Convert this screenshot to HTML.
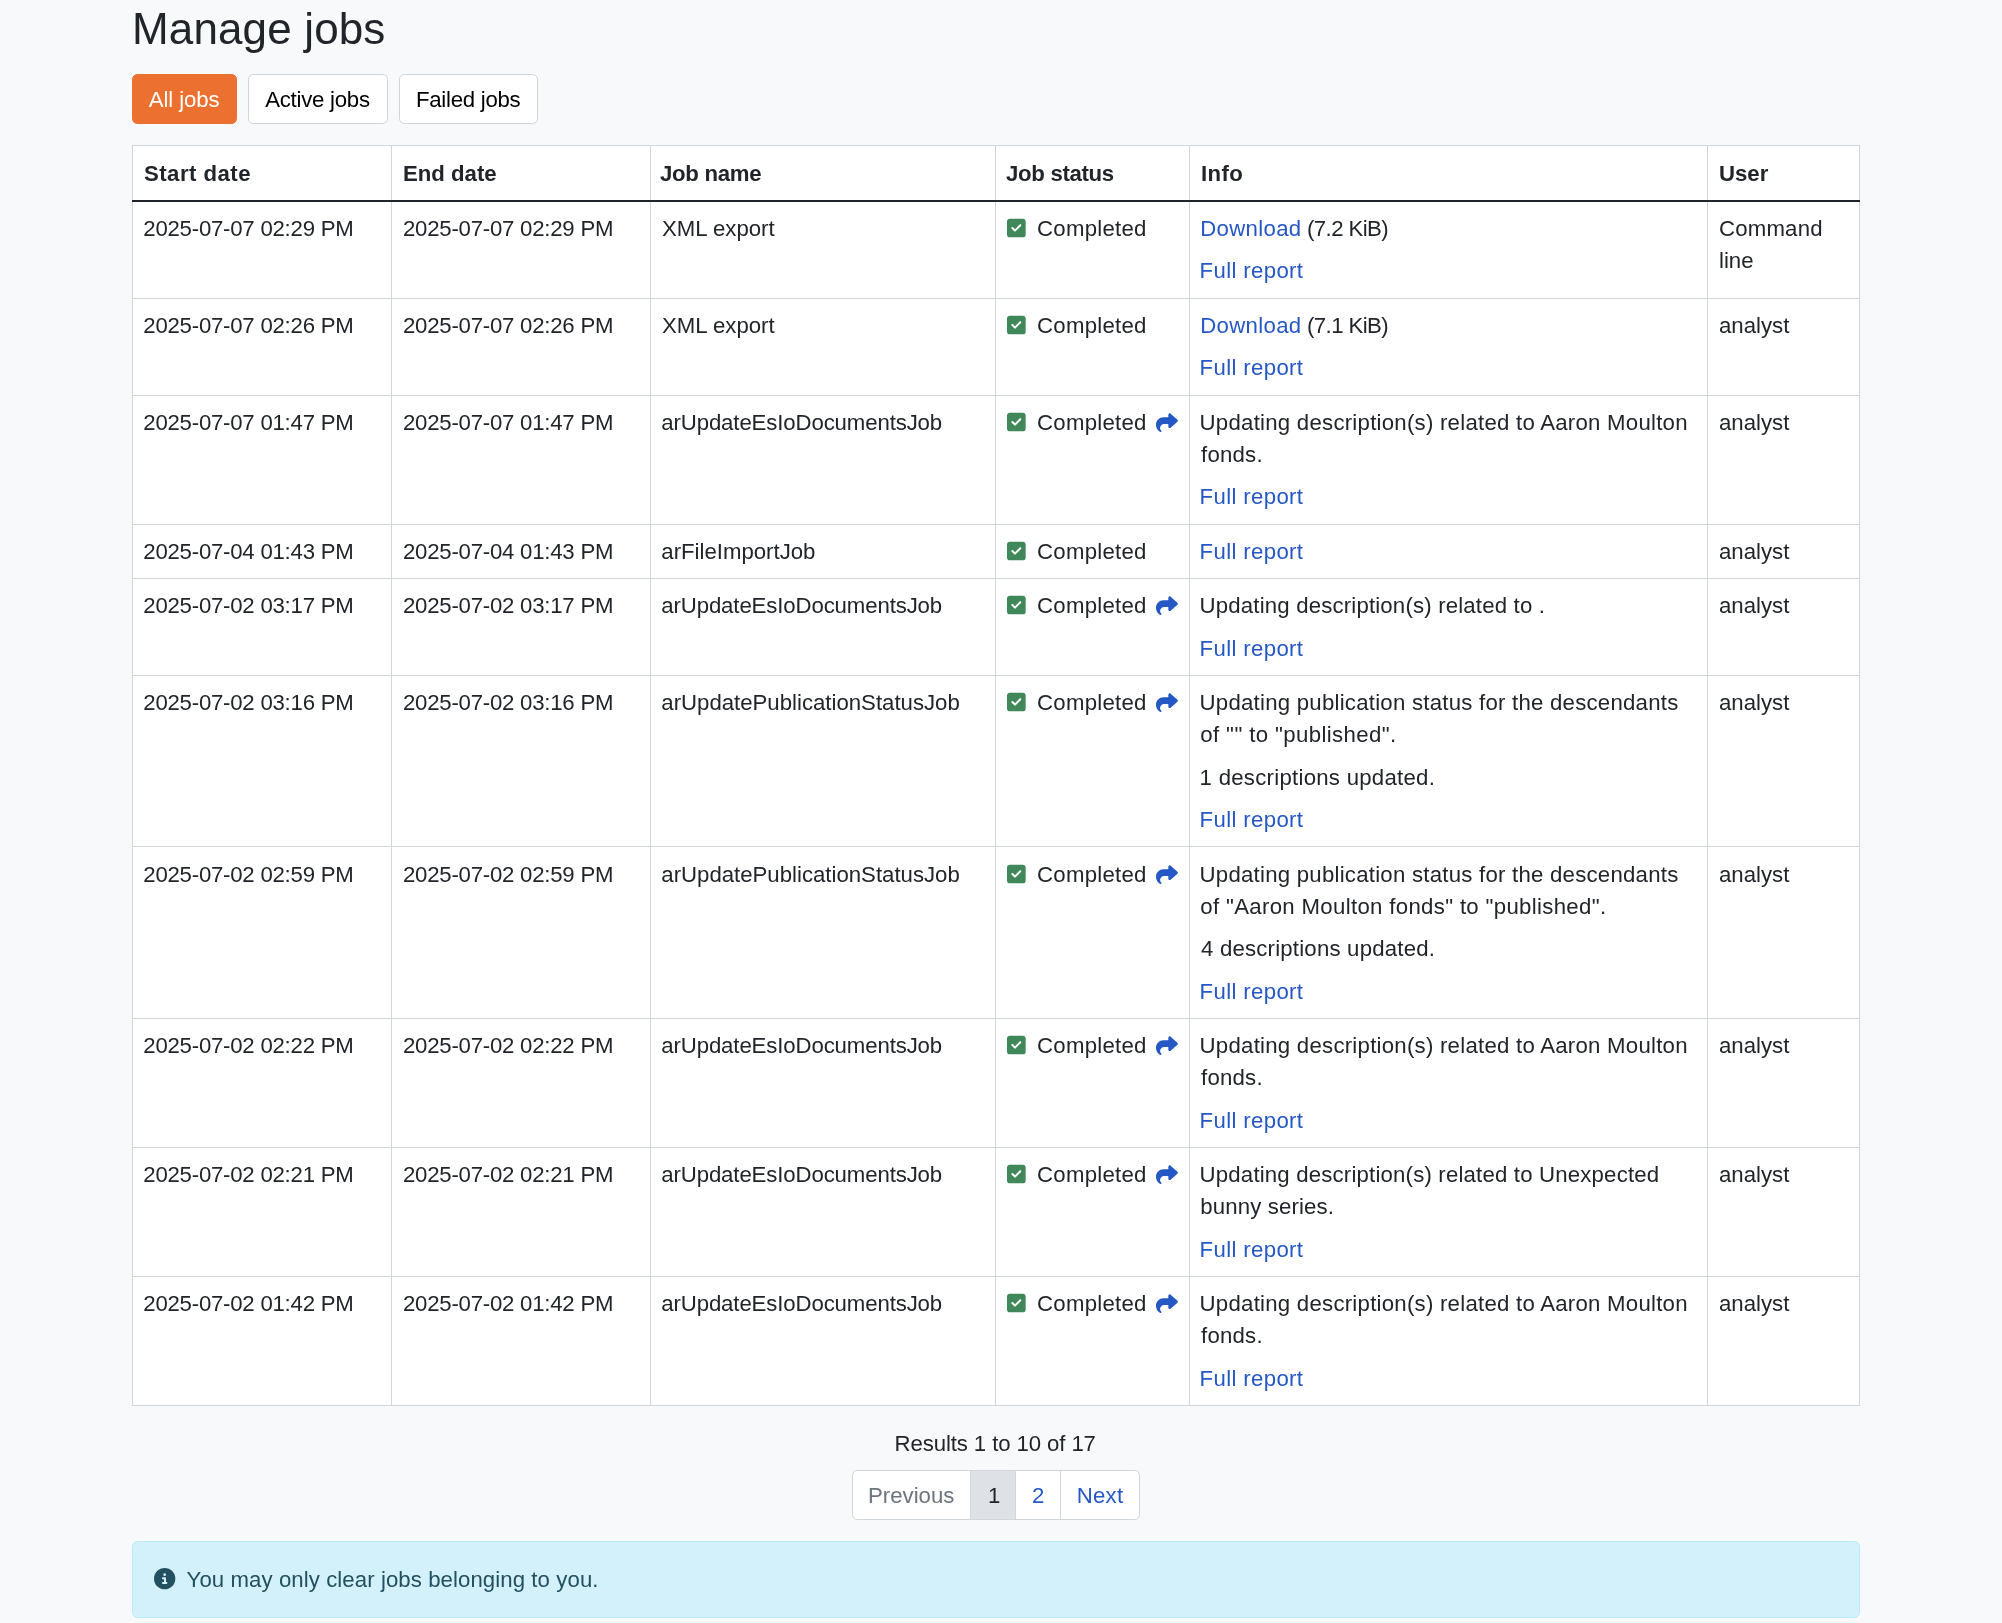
<!DOCTYPE html>
<html><head><meta charset="utf-8"><title>Manage jobs</title>
<style>
*{box-sizing:border-box;margin:0;padding:0}
html,body{width:2002px;height:1623px;overflow:hidden;background:#f8f9fa;}
body{font-family:"Liberation Sans",sans-serif;font-size:22.2px;line-height:32px;color:#212529;position:relative}
.a{position:absolute}
.t{position:absolute;white-space:nowrap}
.lnk{color:#2557c5}
.hl{position:absolute;background:#d1d6db;height:1px}
.vl{position:absolute;background:#d1d6db;width:1px}
.b{font-weight:bold}
</style></head>
<body>
<div style="position:absolute;left:0;top:0;width:2002px;height:1623px;will-change:transform">
<div class="a" style="left:132px;top:74px;width:105.0px;height:50px;border-radius:5.33px;background:#ec702f;border:1px solid #ec702f;"></div>
<div class="a" style="left:248px;top:74px;width:139.6px;height:50px;border-radius:5.33px;background:#fff;border:1px solid #ced4da;"></div>
<div class="a" style="left:399.2px;top:74px;width:138.4px;height:50px;border-radius:5.33px;background:#fff;border:1px solid #ced4da;"></div>
<div class="a" style="left:132px;top:145px;width:1728px;height:1261px;background:#fff"></div>
<div class="vl" style="left:132px;top:145px;height:1261px"></div>
<div class="vl" style="left:391px;top:145px;height:1261px"></div>
<div class="vl" style="left:650px;top:145px;height:1261px"></div>
<div class="vl" style="left:995px;top:145px;height:1261px"></div>
<div class="vl" style="left:1189px;top:145px;height:1261px"></div>
<div class="vl" style="left:1707px;top:145px;height:1261px"></div>
<div class="vl" style="left:1859px;top:145px;height:1261px"></div>
<div class="hl" style="left:132px;top:145px;width:1728px"></div>
<div class="a" style="left:132px;top:200px;width:1728px;height:2px;background:#212529"></div>
<div class="hl" style="left:132px;top:298px;width:1728px"></div>
<div class="hl" style="left:132px;top:395px;width:1728px"></div>
<div class="hl" style="left:132px;top:524px;width:1728px"></div>
<div class="hl" style="left:132px;top:578px;width:1728px"></div>
<div class="hl" style="left:132px;top:675px;width:1728px"></div>
<div class="hl" style="left:132px;top:846px;width:1728px"></div>
<div class="hl" style="left:132px;top:1018px;width:1728px"></div>
<div class="hl" style="left:132px;top:1147px;width:1728px"></div>
<div class="hl" style="left:132px;top:1276px;width:1728px"></div>
<div class="hl" style="left:132px;top:1405px;width:1728px"></div>
<div class="a" style="left:1007.2px;top:217.40px;width:18.667px;height:21.333px"><svg width="18.667" height="21.333" viewBox="0 -8 448 512" style="position:absolute;left:0;top:0;overflow:visible"><path fill="#40875a" d="M64 32C28.7 32 0 60.7 0 96V416c0 35.3 28.7 64 64 64H384c35.3 0 64-28.7 64-64V96c0-35.3-28.7-64-64-64H64z"/><path fill="#fff" d="M337 209L209 337c-9.4 9.4-24.6 9.4-33.9 0l-64-64c-9.4-9.4-9.4-24.6 0-33.9s24.6-9.4 33.9 0l47 47L303 175c9.4-9.4 24.6-9.4 33.9 0s9.4 24.6 0 33.9z"/></svg></div>
<div class="a" style="left:1007.2px;top:314.40px;width:18.667px;height:21.333px"><svg width="18.667" height="21.333" viewBox="0 -8 448 512" style="position:absolute;left:0;top:0;overflow:visible"><path fill="#40875a" d="M64 32C28.7 32 0 60.7 0 96V416c0 35.3 28.7 64 64 64H384c35.3 0 64-28.7 64-64V96c0-35.3-28.7-64-64-64H64z"/><path fill="#fff" d="M337 209L209 337c-9.4 9.4-24.6 9.4-33.9 0l-64-64c-9.4-9.4-9.4-24.6 0-33.9s24.6-9.4 33.9 0l47 47L303 175c9.4-9.4 24.6-9.4 33.9 0s9.4 24.6 0 33.9z"/></svg></div>
<div class="a" style="left:1007.2px;top:411.40px;width:18.667px;height:21.333px"><svg width="18.667" height="21.333" viewBox="0 -8 448 512" style="position:absolute;left:0;top:0;overflow:visible"><path fill="#40875a" d="M64 32C28.7 32 0 60.7 0 96V416c0 35.3 28.7 64 64 64H384c35.3 0 64-28.7 64-64V96c0-35.3-28.7-64-64-64H64z"/><path fill="#fff" d="M337 209L209 337c-9.4 9.4-24.6 9.4-33.9 0l-64-64c-9.4-9.4-9.4-24.6 0-33.9s24.6-9.4 33.9 0l47 47L303 175c9.4-9.4 24.6-9.4 33.9 0s9.4 24.6 0 33.9z"/></svg></div>
<div class="a" style="left:1156.0px;top:412.05px;width:21.9px;height:21.333px"><svg width="21.9" height="21.333" viewBox="0 0 512 512" preserveAspectRatio="none" style="position:absolute;left:0;top:0;overflow:visible"><path fill="#2557c5" d="M307 34.8c-11.5 5.1-19 16.6-19 29.2v64H176C78.8 128 0 206.8 0 304C0 417.3 81.5 467.9 100.2 478.1c2.5 1.4 5.3 1.9 8.1 1.9c10.9 0 19.7-8.9 19.7-19.7c0-7.5-4.3-14.4-9.8-19.5C108.8 431.9 96 414.4 96 384c0-53 43-96 96-96h96v64c0 12.6 7.4 24.1 19 29.2s25 3 34.4-5.4l160-144c6.7-6.1 10.6-14.7 10.6-23.8s-3.8-17.7-10.6-23.8l-160-144c-9.4-8.5-22.9-10.6-34.4-5.4z"/></svg></div>
<div class="a" style="left:1007.2px;top:540.40px;width:18.667px;height:21.333px"><svg width="18.667" height="21.333" viewBox="0 -8 448 512" style="position:absolute;left:0;top:0;overflow:visible"><path fill="#40875a" d="M64 32C28.7 32 0 60.7 0 96V416c0 35.3 28.7 64 64 64H384c35.3 0 64-28.7 64-64V96c0-35.3-28.7-64-64-64H64z"/><path fill="#fff" d="M337 209L209 337c-9.4 9.4-24.6 9.4-33.9 0l-64-64c-9.4-9.4-9.4-24.6 0-33.9s24.6-9.4 33.9 0l47 47L303 175c9.4-9.4 24.6-9.4 33.9 0s9.4 24.6 0 33.9z"/></svg></div>
<div class="a" style="left:1007.2px;top:594.40px;width:18.667px;height:21.333px"><svg width="18.667" height="21.333" viewBox="0 -8 448 512" style="position:absolute;left:0;top:0;overflow:visible"><path fill="#40875a" d="M64 32C28.7 32 0 60.7 0 96V416c0 35.3 28.7 64 64 64H384c35.3 0 64-28.7 64-64V96c0-35.3-28.7-64-64-64H64z"/><path fill="#fff" d="M337 209L209 337c-9.4 9.4-24.6 9.4-33.9 0l-64-64c-9.4-9.4-9.4-24.6 0-33.9s24.6-9.4 33.9 0l47 47L303 175c9.4-9.4 24.6-9.4 33.9 0s9.4 24.6 0 33.9z"/></svg></div>
<div class="a" style="left:1156.0px;top:595.05px;width:21.9px;height:21.333px"><svg width="21.9" height="21.333" viewBox="0 0 512 512" preserveAspectRatio="none" style="position:absolute;left:0;top:0;overflow:visible"><path fill="#2557c5" d="M307 34.8c-11.5 5.1-19 16.6-19 29.2v64H176C78.8 128 0 206.8 0 304C0 417.3 81.5 467.9 100.2 478.1c2.5 1.4 5.3 1.9 8.1 1.9c10.9 0 19.7-8.9 19.7-19.7c0-7.5-4.3-14.4-9.8-19.5C108.8 431.9 96 414.4 96 384c0-53 43-96 96-96h96v64c0 12.6 7.4 24.1 19 29.2s25 3 34.4-5.4l160-144c6.7-6.1 10.6-14.7 10.6-23.8s-3.8-17.7-10.6-23.8l-160-144c-9.4-8.5-22.9-10.6-34.4-5.4z"/></svg></div>
<div class="a" style="left:1007.2px;top:691.40px;width:18.667px;height:21.333px"><svg width="18.667" height="21.333" viewBox="0 -8 448 512" style="position:absolute;left:0;top:0;overflow:visible"><path fill="#40875a" d="M64 32C28.7 32 0 60.7 0 96V416c0 35.3 28.7 64 64 64H384c35.3 0 64-28.7 64-64V96c0-35.3-28.7-64-64-64H64z"/><path fill="#fff" d="M337 209L209 337c-9.4 9.4-24.6 9.4-33.9 0l-64-64c-9.4-9.4-9.4-24.6 0-33.9s24.6-9.4 33.9 0l47 47L303 175c9.4-9.4 24.6-9.4 33.9 0s9.4 24.6 0 33.9z"/></svg></div>
<div class="a" style="left:1156.0px;top:692.05px;width:21.9px;height:21.333px"><svg width="21.9" height="21.333" viewBox="0 0 512 512" preserveAspectRatio="none" style="position:absolute;left:0;top:0;overflow:visible"><path fill="#2557c5" d="M307 34.8c-11.5 5.1-19 16.6-19 29.2v64H176C78.8 128 0 206.8 0 304C0 417.3 81.5 467.9 100.2 478.1c2.5 1.4 5.3 1.9 8.1 1.9c10.9 0 19.7-8.9 19.7-19.7c0-7.5-4.3-14.4-9.8-19.5C108.8 431.9 96 414.4 96 384c0-53 43-96 96-96h96v64c0 12.6 7.4 24.1 19 29.2s25 3 34.4-5.4l160-144c6.7-6.1 10.6-14.7 10.6-23.8s-3.8-17.7-10.6-23.8l-160-144c-9.4-8.5-22.9-10.6-34.4-5.4z"/></svg></div>
<div class="a" style="left:1007.2px;top:863.40px;width:18.667px;height:21.333px"><svg width="18.667" height="21.333" viewBox="0 -8 448 512" style="position:absolute;left:0;top:0;overflow:visible"><path fill="#40875a" d="M64 32C28.7 32 0 60.7 0 96V416c0 35.3 28.7 64 64 64H384c35.3 0 64-28.7 64-64V96c0-35.3-28.7-64-64-64H64z"/><path fill="#fff" d="M337 209L209 337c-9.4 9.4-24.6 9.4-33.9 0l-64-64c-9.4-9.4-9.4-24.6 0-33.9s24.6-9.4 33.9 0l47 47L303 175c9.4-9.4 24.6-9.4 33.9 0s9.4 24.6 0 33.9z"/></svg></div>
<div class="a" style="left:1156.0px;top:864.05px;width:21.9px;height:21.333px"><svg width="21.9" height="21.333" viewBox="0 0 512 512" preserveAspectRatio="none" style="position:absolute;left:0;top:0;overflow:visible"><path fill="#2557c5" d="M307 34.8c-11.5 5.1-19 16.6-19 29.2v64H176C78.8 128 0 206.8 0 304C0 417.3 81.5 467.9 100.2 478.1c2.5 1.4 5.3 1.9 8.1 1.9c10.9 0 19.7-8.9 19.7-19.7c0-7.5-4.3-14.4-9.8-19.5C108.8 431.9 96 414.4 96 384c0-53 43-96 96-96h96v64c0 12.6 7.4 24.1 19 29.2s25 3 34.4-5.4l160-144c6.7-6.1 10.6-14.7 10.6-23.8s-3.8-17.7-10.6-23.8l-160-144c-9.4-8.5-22.9-10.6-34.4-5.4z"/></svg></div>
<div class="a" style="left:1007.2px;top:1034.40px;width:18.667px;height:21.333px"><svg width="18.667" height="21.333" viewBox="0 -8 448 512" style="position:absolute;left:0;top:0;overflow:visible"><path fill="#40875a" d="M64 32C28.7 32 0 60.7 0 96V416c0 35.3 28.7 64 64 64H384c35.3 0 64-28.7 64-64V96c0-35.3-28.7-64-64-64H64z"/><path fill="#fff" d="M337 209L209 337c-9.4 9.4-24.6 9.4-33.9 0l-64-64c-9.4-9.4-9.4-24.6 0-33.9s24.6-9.4 33.9 0l47 47L303 175c9.4-9.4 24.6-9.4 33.9 0s9.4 24.6 0 33.9z"/></svg></div>
<div class="a" style="left:1156.0px;top:1035.05px;width:21.9px;height:21.333px"><svg width="21.9" height="21.333" viewBox="0 0 512 512" preserveAspectRatio="none" style="position:absolute;left:0;top:0;overflow:visible"><path fill="#2557c5" d="M307 34.8c-11.5 5.1-19 16.6-19 29.2v64H176C78.8 128 0 206.8 0 304C0 417.3 81.5 467.9 100.2 478.1c2.5 1.4 5.3 1.9 8.1 1.9c10.9 0 19.7-8.9 19.7-19.7c0-7.5-4.3-14.4-9.8-19.5C108.8 431.9 96 414.4 96 384c0-53 43-96 96-96h96v64c0 12.6 7.4 24.1 19 29.2s25 3 34.4-5.4l160-144c6.7-6.1 10.6-14.7 10.6-23.8s-3.8-17.7-10.6-23.8l-160-144c-9.4-8.5-22.9-10.6-34.4-5.4z"/></svg></div>
<div class="a" style="left:1007.2px;top:1163.40px;width:18.667px;height:21.333px"><svg width="18.667" height="21.333" viewBox="0 -8 448 512" style="position:absolute;left:0;top:0;overflow:visible"><path fill="#40875a" d="M64 32C28.7 32 0 60.7 0 96V416c0 35.3 28.7 64 64 64H384c35.3 0 64-28.7 64-64V96c0-35.3-28.7-64-64-64H64z"/><path fill="#fff" d="M337 209L209 337c-9.4 9.4-24.6 9.4-33.9 0l-64-64c-9.4-9.4-9.4-24.6 0-33.9s24.6-9.4 33.9 0l47 47L303 175c9.4-9.4 24.6-9.4 33.9 0s9.4 24.6 0 33.9z"/></svg></div>
<div class="a" style="left:1156.0px;top:1164.05px;width:21.9px;height:21.333px"><svg width="21.9" height="21.333" viewBox="0 0 512 512" preserveAspectRatio="none" style="position:absolute;left:0;top:0;overflow:visible"><path fill="#2557c5" d="M307 34.8c-11.5 5.1-19 16.6-19 29.2v64H176C78.8 128 0 206.8 0 304C0 417.3 81.5 467.9 100.2 478.1c2.5 1.4 5.3 1.9 8.1 1.9c10.9 0 19.7-8.9 19.7-19.7c0-7.5-4.3-14.4-9.8-19.5C108.8 431.9 96 414.4 96 384c0-53 43-96 96-96h96v64c0 12.6 7.4 24.1 19 29.2s25 3 34.4-5.4l160-144c6.7-6.1 10.6-14.7 10.6-23.8s-3.8-17.7-10.6-23.8l-160-144c-9.4-8.5-22.9-10.6-34.4-5.4z"/></svg></div>
<div class="a" style="left:1007.2px;top:1292.40px;width:18.667px;height:21.333px"><svg width="18.667" height="21.333" viewBox="0 -8 448 512" style="position:absolute;left:0;top:0;overflow:visible"><path fill="#40875a" d="M64 32C28.7 32 0 60.7 0 96V416c0 35.3 28.7 64 64 64H384c35.3 0 64-28.7 64-64V96c0-35.3-28.7-64-64-64H64z"/><path fill="#fff" d="M337 209L209 337c-9.4 9.4-24.6 9.4-33.9 0l-64-64c-9.4-9.4-9.4-24.6 0-33.9s24.6-9.4 33.9 0l47 47L303 175c9.4-9.4 24.6-9.4 33.9 0s9.4 24.6 0 33.9z"/></svg></div>
<div class="a" style="left:1156.0px;top:1293.05px;width:21.9px;height:21.333px"><svg width="21.9" height="21.333" viewBox="0 0 512 512" preserveAspectRatio="none" style="position:absolute;left:0;top:0;overflow:visible"><path fill="#2557c5" d="M307 34.8c-11.5 5.1-19 16.6-19 29.2v64H176C78.8 128 0 206.8 0 304C0 417.3 81.5 467.9 100.2 478.1c2.5 1.4 5.3 1.9 8.1 1.9c10.9 0 19.7-8.9 19.7-19.7c0-7.5-4.3-14.4-9.8-19.5C108.8 431.9 96 414.4 96 384c0-53 43-96 96-96h96v64c0 12.6 7.4 24.1 19 29.2s25 3 34.4-5.4l160-144c6.7-6.1 10.6-14.7 10.6-23.8s-3.8-17.7-10.6-23.8l-160-144c-9.4-8.5-22.9-10.6-34.4-5.4z"/></svg></div>
<div class="a" style="left:852px;top:1470px;width:288px;height:50px;background:#fff;border:1px solid #d1d6db;border-radius:5.33px;overflow:hidden"></div>
<div class="a" style="left:970px;top:1471px;width:46px;height:48px;background:#dee2e6"></div>
<div class="vl" style="left:970px;top:1470px;height:50px"></div>
<div class="vl" style="left:1015px;top:1470px;height:50px"></div>
<div class="vl" style="left:1060px;top:1470px;height:50px"></div>
<div class="a" style="left:132px;top:1541px;width:1728px;height:77px;background:#d3f1fa;border:1px solid #b9ebf7;border-radius:5.33px"></div>
<div class="a" style="left:154.2px;top:1568.1px;width:21.333px;height:21.333px"><svg width="21.333" height="21.333" viewBox="0 0 512 512" style="position:absolute;left:0;top:0;overflow:visible"><path fill="#225060" d="M256 512A256 256 0 1 0 256 0a256 256 0 1 0 0 512zM216 336h24V272H216c-13.3 0-24-10.7-24-24s10.7-24 24-24h48c13.3 0 24 10.7 24 24v88h8c13.3 0 24 10.7 24 24s-10.7 24-24 24H216c-13.3 0-24-10.7-24-24s10.7-24 24-24zm40-208a32 32 0 1 1 0 64 32 32 0 1 1 0-64z"/></svg></div>
<div id="title" class="t" style="left:132.00px;top:2.00px;font-size:44.00px;line-height:53px;letter-spacing:0.140px;">Manage jobs</div>
<div id="btn0" class="t" style="left:148.68px;top:84.00px;letter-spacing:-0.080px;color:#fff;">All jobs</div>
<div id="btn1" class="t" style="left:265.15px;top:84.00px;letter-spacing:-0.238px;color:#000;">Active jobs</div>
<div id="btn2" class="t" style="left:415.93px;top:84.00px;letter-spacing:-0.252px;color:#000;">Failed jobs</div>
<div id="h0" class="t b" style="left:144.00px;top:158.00px;letter-spacing:0.467px;">Start date</div>
<div id="h1" class="t b" style="left:403.00px;top:158.00px;">End date</div>
<div id="h2" class="t b" style="left:660.04px;top:158.00px;letter-spacing:-0.300px;">Job name</div>
<div id="h3" class="t b" style="left:1006.02px;top:158.00px;letter-spacing:-0.311px;">Job status</div>
<div id="h4" class="t b" style="left:1201.00px;top:158.00px;letter-spacing:0.397px;">Info</div>
<div id="h5" class="t b" style="left:1719.00px;top:158.00px;">User</div>
<div id="r0d1" class="t" style="left:143.30px;top:213.00px;letter-spacing:-0.233px;">2025-07-07 02:29 PM</div>
<div id="r0d2" class="t" style="left:403.00px;top:213.00px;letter-spacing:-0.233px;">2025-07-07 02:29 PM</div>
<div id="r0n" class="t" style="left:662.00px;top:213.00px;">XML export</div>
<div id="r0s" class="t" style="left:1037.00px;top:213.00px;letter-spacing:0.262px;">Completed</div>
<div id="r0i0s0" class="t" style="left:1200.16px;top:213.00px;letter-spacing:0.330px;"><span class="lnk">Download</span></div>
<div id="r0i0s1" class="t" style="left:1307.00px;top:213.00px;letter-spacing:-0.577px;">(7.2 KiB)</div>
<div id="r0i1" class="t" style="left:1199.60px;top:255.00px;letter-spacing:0.350px;"><span class="lnk">Full report</span></div>
<div id="r0u0" class="t" style="left:1719.00px;top:213.00px;letter-spacing:0.198px;">Command</div>
<div id="r0u1" class="t" style="left:1719.00px;top:245.00px;">line</div>
<div id="r1d1" class="t" style="left:143.30px;top:310.00px;letter-spacing:-0.233px;">2025-07-07 02:26 PM</div>
<div id="r1d2" class="t" style="left:403.00px;top:310.00px;letter-spacing:-0.233px;">2025-07-07 02:26 PM</div>
<div id="r1n" class="t" style="left:662.00px;top:310.00px;">XML export</div>
<div id="r1s" class="t" style="left:1037.00px;top:310.00px;letter-spacing:0.262px;">Completed</div>
<div id="r1i0s0" class="t" style="left:1200.16px;top:310.00px;letter-spacing:0.330px;"><span class="lnk">Download</span></div>
<div id="r1i0s1" class="t" style="left:1307.00px;top:310.00px;letter-spacing:-0.577px;">(7.1 KiB)</div>
<div id="r1i1" class="t" style="left:1199.60px;top:352.00px;letter-spacing:0.350px;"><span class="lnk">Full report</span></div>
<div id="r1u0" class="t" style="left:1719.00px;top:310.00px;">analyst</div>
<div id="r2d1" class="t" style="left:143.30px;top:407.00px;letter-spacing:-0.233px;">2025-07-07 01:47 PM</div>
<div id="r2d2" class="t" style="left:403.00px;top:407.00px;letter-spacing:-0.233px;">2025-07-07 01:47 PM</div>
<div id="r2n" class="t" style="left:661.30px;top:407.00px;letter-spacing:-0.121px;">arUpdateEsIoDocumentsJob</div>
<div id="r2s" class="t" style="left:1037.00px;top:407.00px;letter-spacing:0.262px;">Completed</div>
<div id="r2i0" class="t" style="left:1199.60px;top:407.00px;letter-spacing:0.253px;">Updating description(s) related to Aaron Moulton</div>
<div id="r2i1" class="t" style="left:1201.00px;top:439.00px;letter-spacing:0.224px;">fonds.</div>
<div id="r2i2" class="t" style="left:1199.60px;top:481.00px;letter-spacing:0.350px;"><span class="lnk">Full report</span></div>
<div id="r2u0" class="t" style="left:1719.00px;top:407.00px;">analyst</div>
<div id="r3d1" class="t" style="left:143.30px;top:536.00px;letter-spacing:-0.233px;">2025-07-04 01:43 PM</div>
<div id="r3d2" class="t" style="left:403.00px;top:536.00px;letter-spacing:-0.233px;">2025-07-04 01:43 PM</div>
<div id="r3n" class="t" style="left:661.30px;top:536.00px;">arFileImportJob</div>
<div id="r3s" class="t" style="left:1037.00px;top:536.00px;letter-spacing:0.262px;">Completed</div>
<div id="r3i0" class="t" style="left:1199.60px;top:536.00px;letter-spacing:0.350px;"><span class="lnk">Full report</span></div>
<div id="r3u0" class="t" style="left:1719.00px;top:536.00px;">analyst</div>
<div id="r4d1" class="t" style="left:143.30px;top:590.00px;letter-spacing:-0.233px;">2025-07-02 03:17 PM</div>
<div id="r4d2" class="t" style="left:403.00px;top:590.00px;letter-spacing:-0.233px;">2025-07-02 03:17 PM</div>
<div id="r4n" class="t" style="left:661.30px;top:590.00px;letter-spacing:-0.121px;">arUpdateEsIoDocumentsJob</div>
<div id="r4s" class="t" style="left:1037.00px;top:590.00px;letter-spacing:0.262px;">Completed</div>
<div id="r4i0" class="t" style="left:1199.60px;top:590.00px;letter-spacing:0.176px;">Updating description(s) related to .</div>
<div id="r4i1" class="t" style="left:1199.60px;top:633.00px;letter-spacing:0.350px;"><span class="lnk">Full report</span></div>
<div id="r4u0" class="t" style="left:1719.00px;top:590.00px;">analyst</div>
<div id="r5d1" class="t" style="left:143.30px;top:687.00px;letter-spacing:-0.233px;">2025-07-02 03:16 PM</div>
<div id="r5d2" class="t" style="left:403.00px;top:687.00px;letter-spacing:-0.233px;">2025-07-02 03:16 PM</div>
<div id="r5n" class="t" style="left:661.30px;top:687.00px;">arUpdatePublicationStatusJob</div>
<div id="r5s" class="t" style="left:1037.00px;top:687.00px;letter-spacing:0.262px;">Completed</div>
<div id="r5i0" class="t" style="left:1199.60px;top:687.00px;letter-spacing:0.243px;">Updating publication status for the descendants</div>
<div id="r5i1" class="t" style="left:1200.30px;top:719.00px;letter-spacing:0.385px;">of "" to "published".</div>
<div id="r5i2" class="t" style="left:1199.60px;top:762.00px;letter-spacing:0.267px;">1 descriptions updated.</div>
<div id="r5i3" class="t" style="left:1199.60px;top:804.00px;letter-spacing:0.350px;"><span class="lnk">Full report</span></div>
<div id="r5u0" class="t" style="left:1719.00px;top:687.00px;">analyst</div>
<div id="r6d1" class="t" style="left:143.30px;top:859.00px;letter-spacing:-0.233px;">2025-07-02 02:59 PM</div>
<div id="r6d2" class="t" style="left:403.00px;top:859.00px;letter-spacing:-0.233px;">2025-07-02 02:59 PM</div>
<div id="r6n" class="t" style="left:661.30px;top:859.00px;">arUpdatePublicationStatusJob</div>
<div id="r6s" class="t" style="left:1037.00px;top:859.00px;letter-spacing:0.262px;">Completed</div>
<div id="r6i0" class="t" style="left:1199.60px;top:859.00px;letter-spacing:0.243px;">Updating publication status for the descendants</div>
<div id="r6i1" class="t" style="left:1200.30px;top:891.00px;letter-spacing:0.330px;">of "Aaron Moulton fonds" to "published".</div>
<div id="r6i2" class="t" style="left:1201.00px;top:933.00px;letter-spacing:0.204px;">4 descriptions updated.</div>
<div id="r6i3" class="t" style="left:1199.60px;top:976.00px;letter-spacing:0.350px;"><span class="lnk">Full report</span></div>
<div id="r6u0" class="t" style="left:1719.00px;top:859.00px;">analyst</div>
<div id="r7d1" class="t" style="left:143.30px;top:1030.00px;letter-spacing:-0.233px;">2025-07-02 02:22 PM</div>
<div id="r7d2" class="t" style="left:403.00px;top:1030.00px;letter-spacing:-0.233px;">2025-07-02 02:22 PM</div>
<div id="r7n" class="t" style="left:661.30px;top:1030.00px;letter-spacing:-0.121px;">arUpdateEsIoDocumentsJob</div>
<div id="r7s" class="t" style="left:1037.00px;top:1030.00px;letter-spacing:0.262px;">Completed</div>
<div id="r7i0" class="t" style="left:1199.60px;top:1030.00px;letter-spacing:0.253px;">Updating description(s) related to Aaron Moulton</div>
<div id="r7i1" class="t" style="left:1201.00px;top:1062.00px;letter-spacing:0.224px;">fonds.</div>
<div id="r7i2" class="t" style="left:1199.60px;top:1105.00px;letter-spacing:0.350px;"><span class="lnk">Full report</span></div>
<div id="r7u0" class="t" style="left:1719.00px;top:1030.00px;">analyst</div>
<div id="r8d1" class="t" style="left:143.30px;top:1159.00px;letter-spacing:-0.233px;">2025-07-02 02:21 PM</div>
<div id="r8d2" class="t" style="left:403.00px;top:1159.00px;letter-spacing:-0.233px;">2025-07-02 02:21 PM</div>
<div id="r8n" class="t" style="left:661.30px;top:1159.00px;letter-spacing:-0.121px;">arUpdateEsIoDocumentsJob</div>
<div id="r8s" class="t" style="left:1037.00px;top:1159.00px;letter-spacing:0.262px;">Completed</div>
<div id="r8i0" class="t" style="left:1199.60px;top:1159.00px;letter-spacing:0.185px;">Updating description(s) related to Unexpected</div>
<div id="r8i1" class="t" style="left:1200.30px;top:1191.00px;letter-spacing:0.146px;">bunny series.</div>
<div id="r8i2" class="t" style="left:1199.60px;top:1234.00px;letter-spacing:0.350px;"><span class="lnk">Full report</span></div>
<div id="r8u0" class="t" style="left:1719.00px;top:1159.00px;">analyst</div>
<div id="r9d1" class="t" style="left:143.30px;top:1288.00px;letter-spacing:-0.233px;">2025-07-02 01:42 PM</div>
<div id="r9d2" class="t" style="left:403.00px;top:1288.00px;letter-spacing:-0.233px;">2025-07-02 01:42 PM</div>
<div id="r9n" class="t" style="left:661.30px;top:1288.00px;letter-spacing:-0.121px;">arUpdateEsIoDocumentsJob</div>
<div id="r9s" class="t" style="left:1037.00px;top:1288.00px;letter-spacing:0.262px;">Completed</div>
<div id="r9i0" class="t" style="left:1199.60px;top:1288.00px;letter-spacing:0.253px;">Updating description(s) related to Aaron Moulton</div>
<div id="r9i1" class="t" style="left:1201.00px;top:1320.00px;letter-spacing:0.224px;">fonds.</div>
<div id="r9i2" class="t" style="left:1199.60px;top:1363.00px;letter-spacing:0.350px;"><span class="lnk">Full report</span></div>
<div id="r9u0" class="t" style="left:1719.00px;top:1288.00px;">analyst</div>
<div id="results" class="t" style="left:894.56px;top:1428.00px;letter-spacing:-0.105px;">Results 1 to 10 of 17</div>
<div id="pprev" class="t" style="left:868.02px;top:1480.00px;color:#6c757d;">Previous</div>
<div id="p1" class="t" style="left:988.00px;top:1480.00px;color:#212529;">1</div>
<div id="p2" class="t" style="left:1032.00px;top:1480.00px;color:#2557c5;">2</div>
<div id="pnext" class="t" style="left:1076.74px;top:1480.00px;letter-spacing:0.233px;color:#2557c5;">Next</div>
<div id="alert" class="t" style="left:186.56px;top:1564.00px;letter-spacing:0.081px;color:#225060;">You may only clear jobs belonging to you.</div>
</div>
</body></html>
